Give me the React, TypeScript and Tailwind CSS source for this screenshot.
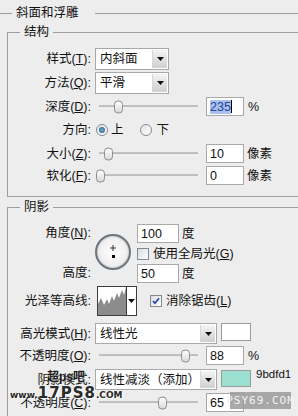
import React from 'react';

function Key({ k }: { k: string }) {
  return (
    <>
      (<span className="underline underline-offset-[1px]">{k}</span>):
    </>
  );
}

function Label({ children }: { children: React.ReactNode }) {
  return <div className="w-[84px] shrink-0 text-right pr-[1px] whitespace-nowrap">{children}</div>;
}

function Arrow() {
  return (
    <svg width="7" height="4" viewBox="0 0 7 4">
      <polygon points="0,0 7,0 3.5,4" fill="#111" />
    </svg>
  );
}

function Dropdown({ text, w }: { text: string; w: string }) {
  return (
    <div className={`flex h-full ${w} ml-[3px] border border-[#a9a9a9] bg-white`}>
      <div className="flex-1 flex items-center pl-[4px] whitespace-nowrap overflow-hidden">{text}</div>
      <div className="w-[15px] m-[1px] flex items-center justify-center bg-linear-to-b from-[#f4f4f4] to-[#cfcfcf] border-l border-[#d6d6d6]">
        <Arrow />
      </div>
    </div>
  );
}

function TextBox({ children, w = 'w-[38px]' }: { children: React.ReactNode; w?: string }) {
  return (
    <div className={`${w} h-[19px] shrink-0 border border-[#a9a9a9] bg-white pl-[3px] flex items-center`}>
      {children}
    </div>
  );
}

function Slider({ thumb }: { thumb: string }) {
  return (
    <div className="relative w-[111px] h-full ml-[3px] shrink-0">
      <div className="absolute left-[4px] w-[99px] top-1/2 -translate-y-1/2 h-[3px] border-t border-[#a2a2a2] border-b border-b-white bg-[#d8d8d8]" />
      <div
        className={`absolute ${thumb} top-1/2 -translate-y-1/2 w-[9px] h-[13px] rounded-[4px] border border-[#8d8d8d] bg-linear-to-b from-white to-[#d9d9d9]`}
      />
    </div>
  );
}

function Radio({ on }: { on?: boolean }) {
  return (
    <div className="w-[12px] h-[12px] rounded-full border border-[#7e8a96] bg-linear-to-br from-[#e2e2e2] to-white flex items-center justify-center shrink-0">
      {on && <div className="w-[6px] h-[6px] rounded-full bg-radial from-[#6fb0d8] to-[#1a4f74]" />}
    </div>
  );
}

function Check({ on }: { on?: boolean }) {
  return (
    <div className="w-[12px] h-[12px] border border-[#7f8a95] bg-linear-to-br from-[#dcdcdc] to-white flex items-center justify-center shrink-0">
      {on && (
        <svg width="8" height="8" viewBox="0 0 8 8">
          <path d="M1 4 L3 6.2 L7 1.2" stroke="#2a48b8" strokeWidth="1.8" fill="none" />
        </svg>
      )}
    </div>
  );
}

export default function App() {
  return (
    <div className="relative w-[298px] h-[416px] overflow-hidden bg-[#ededed] text-[12.5px] leading-[16px] text-[#111] font-['Liberation_Sans','Noto_Sans_CJK_SC',sans-serif]">
      {/* title */}
      <div className="flex items-center h-[26px]">
        <div className="w-[12px] border-t border-[#9d9d9d]" />
        <div className="pl-[4px] pr-[16px] whitespace-nowrap">斜面和浮雕</div>
        <div className="flex-1 border-t border-[#9d9d9d]" />
      </div>

      {/* 结构 */}
      <fieldset className="ml-[7px] -mt-[2px] border border-r-0 border-[#9d9d9d] pb-[11px]">
        <legend className="ml-[12px] px-[4px] leading-[16px]">结构</legend>
        <div className="flex items-center h-[22px] mt-[8px]">
          <Label>样式<Key k="T" /></Label>
          <Dropdown text="内斜面" w="w-[74px]" />
        </div>
        <div className="flex items-center h-[22px] mt-[2px]">
          <Label>方法<Key k="Q" /></Label>
          <Dropdown text="平滑" w="w-[74px]" />
        </div>
        <div className="flex items-center h-[19px] mt-[3px]">
          <Label>深度<Key k="D" /></Label>
          <Slider thumb="left-[19px]" />
          <TextBox>
            <span className="bg-[#a9c1ec] text-[#22449e] leading-[14px]">235</span>
            <span className="w-px h-[13px] bg-black" />
          </TextBox>
          <span className="ml-[4px]">%</span>
        </div>
        <div className="flex items-center h-[18px] mt-[5px]">
          <Label>方向:</Label>
          <div className="ml-[4px]"><Radio on /></div>
          <span className="ml-[3px]">上</span>
          <div className="ml-[16px]"><Radio /></div>
          <span className="ml-[5px]">下</span>
        </div>
        <div className="flex items-center h-[19px] mt-[5px]">
          <Label>大小<Key k="Z" /></Label>
          <Slider thumb="left-[9px]" />
          <TextBox>10</TextBox>
          <span className="ml-[3px]">像素</span>
        </div>
        <div className="flex items-center h-[19px] mt-[3px]">
          <Label>软化<Key k="F" /></Label>
          <Slider thumb="left-[1px]" />
          <TextBox>0</TextBox>
          <span className="ml-[3px]">像素</span>
        </div>
      </fieldset>

      {/* 阴影 */}
      <fieldset className="ml-[7px] mt-[2px] border border-r-0 border-b-0 border-[#9d9d9d] h-[240px]">
        <legend className="ml-[12px] px-[4px] leading-[16px]">阴影</legend>
        <div className="flex h-[59px] mt-[9px]">
          <div className="w-[84px] shrink-0 flex flex-col justify-between text-right pr-[1px]">
            <div className="leading-[19px]">角度<Key k="N" /></div>
            <div className="leading-[19px]">高度:</div>
          </div>
          <div className="ml-[3px] mt-[10px] w-[36px] h-[36px] rounded-full border-2 border-[#6c7580] bg-radial from-white to-[#e4e4e4] shadow-[inset_0_0_2px_#999] flex items-center justify-center">
            <svg width="10" height="16" viewBox="0 0 10 16">
              <path d="M5 1 V7 M2 4 H8" stroke="#333" strokeWidth="1" />
              <rect x="4" y="11" width="3" height="3" fill="#000" />
            </svg>
          </div>
          <div className="ml-[6px] flex flex-col">
            <div className="flex items-center h-[19px]">
              <TextBox w="w-[42px]">100</TextBox>
              <span className="ml-[3px]">度</span>
            </div>
            <div className="flex items-center h-[12px] mt-[5px]">
              <Check />
              <span className="ml-[4px] whitespace-nowrap">使用全局光(<span className="underline">G</span>)</span>
            </div>
            <div className="flex items-center h-[19px] mt-[4px]">
              <TextBox w="w-[42px]">50</TextBox>
              <span className="ml-[3px]">度</span>
            </div>
          </div>
        </div>

        <div className="flex items-center h-[30px] mt-[3px]">
          <Label>光泽等高线:</Label>
          <div className="ml-[5px] w-[40px] h-full border border-[#3c3c3c] bg-white flex">
            <svg width="28" height="28" viewBox="0 0 28 28" className="shrink-0">
              <path
                d="M0 28 L0 17 L3 11 L6 18 L9 12 L11 17 L14 9 L16 14 L19 6 L21 11 L24 3 L26 8 L28 0 L28 28 Z"
                fill="#8c8c8c"
              />
            </svg>
            <div className="flex-1 border-l border-[#3c3c3c] flex items-center justify-center">
              <Arrow />
            </div>
          </div>
          <div className="ml-[13px]"><Check on /></div>
          <span className="ml-[4px] whitespace-nowrap">消除锯齿(<span className="underline">L</span>)</span>
        </div>

        <div className="flex items-center h-[21px] mt-[7px]">
          <Label>高光模式<Key k="H" /></Label>
          <Dropdown text="线性光" w="w-[122px]" />
          <div className="ml-[4px] self-start w-[30px] h-[18px] border border-[#9a9a9a] bg-white" />
        </div>
        <div className="flex items-center h-[19px] mt-[2px]">
          <Label>不透明度<Key k="O" /></Label>
          <Slider thumb="left-[86px]" />
          <TextBox>88</TextBox>
          <span className="ml-[4px]">%</span>
        </div>
        <div className="flex items-center h-[21px] mt-[4px]">
          <Label>阴影模式:</Label>
          <Dropdown text="线性减淡（添加）" w="w-[122px]" />
          <div className="ml-[4px] self-start mt-[1px] w-[30px] h-[17px] border border-[#9a9a9a] bg-[#9bdfd1]" />
          <span className="ml-[5px] self-start -mt-[3px] text-[11.5px]">9bdfd1</span>
        </div>
        <div className="flex items-center h-[19px] mt-[3px]">
          <Label>不透明度<Key k="C" /></Label>
          <Slider thumb="left-[63px]" />
          <TextBox>65</TextBox>
        </div>
      </fieldset>

      {/* watermarks */}
      <div className="absolute left-[47px] top-[370px] text-[12px] font-bold leading-[15px] text-[#1a1a1a] [text-shadow:0_0_2px_#fff]">
        超ps吧
      </div>
      <div className="absolute left-[10px] top-[386px] flex items-end leading-none text-[#2a2a2a] font-['DejaVu_Sans',sans-serif] font-bold [text-shadow:1px_1px_0_#fff]">
        <span className="text-[9px]">www.</span>
        <span className="text-[15px] tracking-[1px] -mb-[1px]">17PS8</span>
        <span className="text-[9px]">.COM</span>
      </div>
      <div className="absolute left-[230px] top-[392px] w-[61px] h-[17px] bg-[#9a9a9a]/85 flex items-center justify-center text-[11px] tracking-[1px] text-[#f4f4f4] font-['DejaVu_Sans_Mono',monospace]">
        PSY69.COM
      </div>
    </div>
  );
}
